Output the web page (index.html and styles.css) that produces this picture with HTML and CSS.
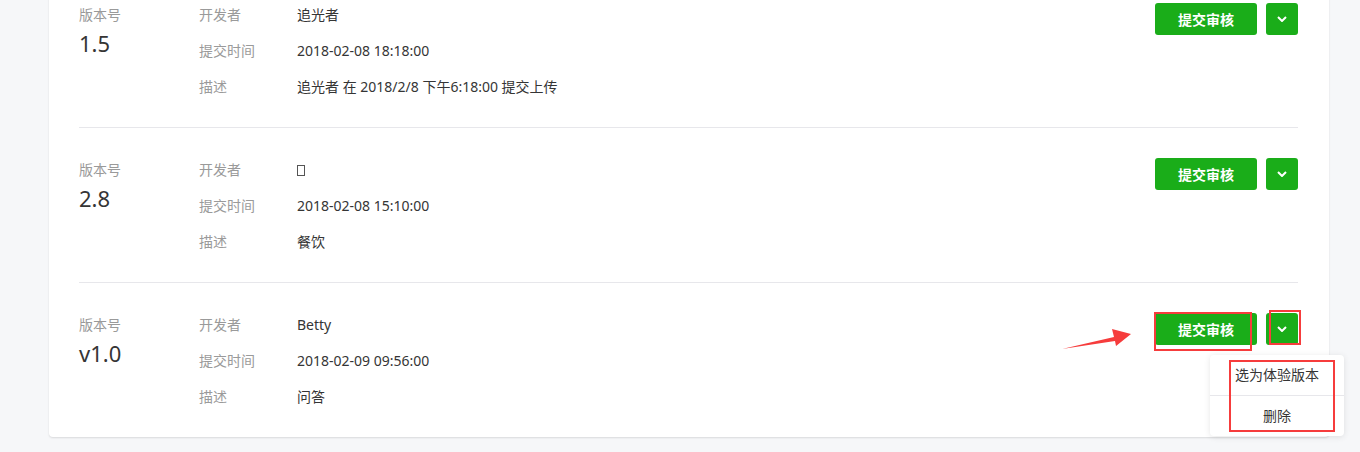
FILE: index.html
```html
<!DOCTYPE html>
<html lang="zh-CN">
<head>
  <meta charset="UTF-8" />
  <meta name="viewport" content="width=device-width, initial-scale=1" />
  <title>版本管理</title>
  <link rel="stylesheet" href="styles.css">
</head>
<body>

  <div class="card">

    <div class="version-row">
      <div class="ver">
        <div class="ver-label">版本号</div>
        <div class="ver-num">1.5</div>
      </div>
      <div class="info">
        <span class="label">开发者</span><span class="value">追光者</span>
        <span class="label">提交时间</span><span class="value">2018-02-08 18:18:00</span>
        <span class="label">描述</span><span class="value">追光者 在 2018/2/8 下午6:18:00 提交上传</span>
      </div>
      <div class="actions">
        <button class="btn-submit" type="button">提交审核</button>
        <button class="btn-more" type="button">
          <svg width="10" height="6" viewBox="0 0 10 6"><path d="M1 1l4 4 4-4" fill="none" stroke="#fff" stroke-width="2"/></svg>
        </button>
      </div>
    </div>

    <div class="version-row">
      <div class="ver">
        <div class="ver-label">版本号</div>
        <div class="ver-num">2.8</div>
      </div>
      <div class="info">
        <span class="label">开发者</span><span class="value"><span class="tofu"></span></span>
        <span class="label">提交时间</span><span class="value">2018-02-08 15:10:00</span>
        <span class="label">描述</span><span class="value">餐饮</span>
      </div>
      <div class="actions">
        <button class="btn-submit" type="button">提交审核</button>
        <button class="btn-more" type="button">
          <svg width="10" height="6" viewBox="0 0 10 6"><path d="M1 1l4 4 4-4" fill="none" stroke="#fff" stroke-width="2"/></svg>
        </button>
      </div>
    </div>

    <div class="version-row">
      <div class="ver">
        <div class="ver-label">版本号</div>
        <div class="ver-num">v1.0</div>
      </div>
      <div class="info">
        <span class="label">开发者</span><span class="value">Betty</span>
        <span class="label">提交时间</span><span class="value">2018-02-09 09:56:00</span>
        <span class="label">描述</span><span class="value">问答</span>
      </div>
      <div class="actions">
        <button class="btn-submit" type="button">提交审核</button>
        <button class="btn-more" type="button">
          <svg width="10" height="6" viewBox="0 0 10 6"><path d="M1 1l4 4 4-4" fill="none" stroke="#fff" stroke-width="2"/></svg>
        </button>
        <ul class="menu">
          <li>选为体验版本</li>
          <li>删除</li>
        </ul>
      </div>
    </div>

  </div>

  <!-- annotations drawn over the screenshot -->
  <div class="mark mark-submit"></div>
  <div class="mark mark-more"></div>
  <div class="mark mark-menu"></div>
  <svg class="arrow" width="1360" height="452" viewBox="0 0 1360 452">
    <polygon points="1062,349 1114,337 1112,329 1131,334 1116,346 1115,341" fill="#f63c3c"/>
  </svg>

</body>
</html>
```

FILE: styles.css
```css
body {
  margin: 0;
  background-color: #f6f7f9;
  font-family: "Noto Sans", "Noto Sans CJK SC", sans-serif;
  font-size: 14px;
  color: #353535;
  height: 452px;
  overflow: hidden;
  position: relative;
}
.card {
  width: 1280px;
  margin: -27px 0 0 49px;
  padding: 0 31px 0 30px;
  box-sizing: border-box;
  background-color: #fff;
  border-radius: 4px;
  box-shadow: 0 1px 2px rgba(0,0,0,0.12);
}
.version-row {
  display: flex;
  align-items: flex-start;
  padding: 30px 0 28px;
  border-bottom: 1px solid #e7e7eb;
}
.version-row:last-child {
  border-bottom: none;
}
.ver {
  width: 120px;
  flex-shrink: 0;
}
.ver-label {
  line-height: 24px;
  color: #9a9a9a;
}
.ver-num {
  font-size: 22px;
  line-height: 30px;
  margin-top: 1px;
  color: #353535;
}
.info {
  flex: 1;
  display: grid;
  grid-template-columns: 98px auto;
  row-gap: 12px;
  line-height: 24px;
}
.label {
  color: #9a9a9a;
}
.value {
  color: #353535;
}
.tofu {
  display: inline-block;
  width: 6px;
  height: 9px;
  border: 1px solid #555;
  vertical-align: -1px;
}
.actions {
  display: flex;
  gap: 9px;
  position: relative;
}
.btn-submit, .btn-more {
  height: 32px;
  border: none;
  border-radius: 3px;
  background-color: #1aad19;
  color: #fff;
  cursor: pointer;
  font-family: inherit;
}
.btn-submit {
  width: 102px;
  font-size: 14px;
  font-weight: bold;
}
.btn-more {
  width: 32px;
  padding: 0;
  display: flex;
  align-items: center;
  justify-content: center;
}
.menu {
  position: absolute;
  top: 42px;
  right: -46px;
  width: 134px;
  margin: 0;
  padding: 0;
  list-style: none;
  background-color: #fff;
  border-radius: 4px;
  box-shadow: 0 1px 6px rgba(0,0,0,0.1);
  z-index: 2;
}
.menu li {
  height: 40px;
  line-height: 40px;
  text-align: center;
  color: #353535;
}
.menu li + li {
  border-top: 1px solid #e7e7eb;
}
.mark {
  position: absolute;
  border: 2px solid #f63c3c;
  box-sizing: border-box;
  z-index: 3;
}
.mark-submit {
  left: 1154px;
  top: 312px;
  width: 98px;
  height: 39px;
}
.mark-more {
  left: 1269px;
  top: 310px;
  width: 32px;
  height: 35px;
}
.mark-menu {
  left: 1229px;
  top: 360px;
  width: 106px;
  height: 72px;
}
.arrow {
  position: absolute;
  left: 0;
  top: 0;
  z-index: 3;
}
```
